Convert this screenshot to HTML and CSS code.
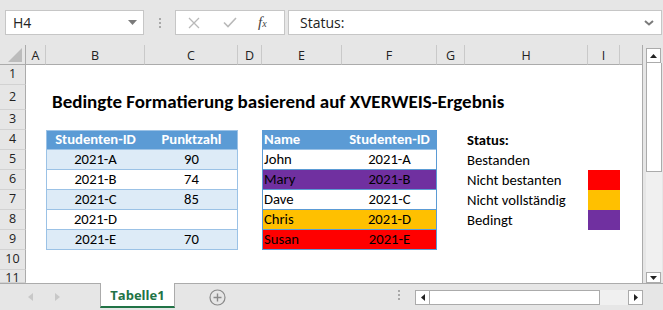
FILE: index.html
```html
<!DOCTYPE html>
<html lang="de">
<head>
    <meta charset="UTF-8">
    <title>Tabelle1 - Excel</title>
    <link rel="stylesheet" href="styles.css">
</head>
<body>
    <div class="formula-bar">
        <div class="name-box">
            <span>H4</span>
            <svg width="9" height="5" viewBox="0 0 9 5"><path d="M0 0h9L4.5 5z" fill="#7a7a7a"/></svg>
        </div>
        <div class="bar-dots"><i></i><i></i><i></i></div>
        <div class="fx-buttons">
            <svg class="fx-cancel" width="12" height="12" viewBox="0 0 12 12"><path d="M1 1l10 10M11 1L1 11" stroke="#b9b9b9" stroke-width="1.3" fill="none"/></svg>
            <svg class="fx-enter" width="14" height="11" viewBox="0 0 14 11"><path d="M1 5.5l4 4L13 1" stroke="#b9b9b9" stroke-width="1.6" fill="none"/></svg>
            <span class="fx-label">f<small>x</small></span>
        </div>
        <div class="formula-input">
            <span>Status:</span>
            <svg width="10" height="6" viewBox="0 0 10 6"><path d="M1 1l4 3.5L9 1" stroke="#7a7a7a" stroke-width="2" fill="none"/></svg>
        </div>
    </div>

    <div class="workspace">
        <div class="sheet">
            <!-- Spaltenköpfe -->
            <div class="col-head corner"><svg width="14" height="14" viewBox="0 0 14 14"><path d="M14 0v14H0z" fill="#bcbcbc"/></svg></div>
            <div class="col-head">A</div>
            <div class="col-head">B</div>
            <div class="col-head">C</div>
            <div class="col-head">D</div>
            <div class="col-head">E</div>
            <div class="col-head">F</div>
            <div class="col-head">G</div>
            <div class="col-head">H</div>
            <div class="col-head">I</div>
            <div class="col-head last"></div>

            <!-- Zeilenköpfe -->
            <div class="row-head r1">1</div>
            <div class="row-head r2">2</div>
            <div class="row-head r3">3</div>
            <div class="row-head r4">4</div>
            <div class="row-head r5">5</div>
            <div class="row-head r6">6</div>
            <div class="row-head r7">7</div>
            <div class="row-head r8">8</div>
            <div class="row-head r9">9</div>
            <div class="row-head r10">10</div>
            <div class="row-head r11">11</div>

            <div class="title">Bedingte Formatierung basierend auf XVERWEIS-Ergebnis</div>

            <div class="table-scores">
                <div class="th">Studenten-ID</div><div class="th">Punktzahl</div>
                <div class="td band">2021-A</div><div class="td band">90</div>
                <div class="td">2021-B</div><div class="td">74</div>
                <div class="td band">2021-C</div><div class="td band">85</div>
                <div class="td">2021-D</div><div class="td"></div>
                <div class="td band last">2021-E</div><div class="td band last">70</div>
            </div>

            <div class="table-names">
                <div class="th left">Name</div><div class="th">Studenten-ID</div>
                <div class="td left">John</div><div class="td">2021-A</div>
                <div class="td left purple">Mary</div><div class="td purple">2021-B</div>
                <div class="td left">Dave</div><div class="td">2021-C</div>
                <div class="td left orange">Chris</div><div class="td orange">2021-D</div>
                <div class="td left red last">Susan</div><div class="td red last">2021-E</div>
            </div>

            <div class="legend">
                <div class="legend-text bold">Status:</div><div></div>
                <div class="legend-text">Bestanden</div><div></div>
                <div class="legend-text">Nicht bestanten</div><div class="swatch red"></div>
                <div class="legend-text">Nicht vollständig</div><div class="swatch orange"></div>
                <div class="legend-text">Bedingt</div><div class="swatch purple"></div>
            </div>
        </div>

        <div class="vscroll">
            <div class="scroll-btn up"><svg width="7" height="4" viewBox="0 0 7 4"><path d="M0 4h7L3.5 0z" fill="#222"/></svg></div>
            <div class="vthumb"></div>
            <div class="vtrack"></div>
            <div class="scroll-btn down"><svg width="7" height="4" viewBox="0 0 7 4"><path d="M0 0h7L3.5 4z" fill="#222"/></svg></div>
        </div>
    </div>

    <div class="tab-bar">
        <div class="tab-nav">
            <svg width="5" height="8" viewBox="0 0 5 8"><path d="M5 0v8L0 4z" fill="#c8c8c8"/></svg>
            <svg width="5" height="8" viewBox="0 0 5 8"><path d="M0 0v8l5-4z" fill="#c8c8c8"/></svg>
        </div>
        <div class="sheet-tab">Tabelle1</div>
        <div class="add-sheet">
            <svg width="17" height="17" viewBox="0 0 17 17"><circle cx="8.5" cy="8.5" r="7.5" stroke="#8a8a8a" stroke-width="1.2" fill="none"/><path d="M8.5 4.5v8M4.5 8.5h8" stroke="#8a8a8a" stroke-width="1.4"/></svg>
        </div>
        <div class="bar-dots tab-dots"><i></i><i></i><i></i></div>
        <div class="hscroll">
            <div class="scroll-btn"><svg width="4" height="7" viewBox="0 0 4 7"><path d="M4 0v7L0 3.5z" fill="#222"/></svg></div>
            <div class="hthumb"></div>
            <div class="htrack"></div>
            <div class="scroll-btn"><svg width="4" height="7" viewBox="0 0 4 7"><path d="M0 0v7l4-3.5z" fill="#222"/></svg></div>
        </div>
    </div>
</body>
</html>
```

FILE: styles.css
```css
* {
    margin: 0;
    padding: 0;
    box-sizing: border-box;
}

:root {
    --ui-bg: #e6e6e6;
    --ui-line: #ababab;
    --head-line: #c9c9c9;
    --table-blue: #5b9bd5;
    --table-band: #ddebf7;
    --table-line: #9bc2e6;
    --excel-green: #217346;
}

body {
    width: 663px;
    height: 310px;
    overflow: hidden;
    background: var(--ui-bg);
    font-family: "Segoe UI", "Open Sans", "Noto Sans", sans-serif;
    color: #222;
}

/* Bearbeitungsleiste */
.formula-bar {
    height: 45px;
    display: flex;
    padding: 10px 1px 0 5px;
}

.name-box {
    width: 139px;
    height: 25px;
    background: #fff;
    border: 1px solid #c6c6c6;
    display: flex;
    align-items: center;
    justify-content: space-between;
    padding: 0 6px 0 7px;
    font-size: 14px;
}

.bar-dots {
    width: 31px;
    height: 25px;
    display: flex;
    flex-direction: column;
    align-items: center;
    justify-content: center;
    gap: 2px;
}

.bar-dots i {
    width: 2px;
    height: 2px;
    background: #a8a8a8;
}

.fx-buttons {
    width: 110px;
    height: 25px;
    background: #fff;
    border: 1px solid #c6c6c6;
    display: flex;
    align-items: center;
    padding-left: 12px;
}

.fx-enter {
    margin-left: 23px;
}

.fx-label {
    margin-left: 21px;
    font-family: "Liberation Serif", "DejaVu Serif", serif;
    font-style: italic;
    font-size: 15px;
    color: #444;
    line-height: 1;
}

.fx-label small {
    font-size: 10px;
}

.formula-input {
    flex: 1;
    height: 25px;
    margin-left: 3px;
    background: #fff;
    border: 1px solid #c6c6c6;
    display: flex;
    align-items: center;
    justify-content: space-between;
    padding: 0 7px 0 11px;
    font-size: 14px;
}

/* Tabellenblatt */
.workspace {
    height: 238px;
    display: flex;
}

.sheet {
    width: 643px;
    display: grid;
    grid-template-columns: 26px 20px 99px 93px 24px 80px 95px 28px 123px 32px 1fr;
    grid-template-rows: 20px 20px 25px repeat(8, 20px) 13px;
    background: #fff;
    border-right: 1px solid var(--ui-line);
    font-family: "Carlito", "Calibri", "Lato", sans-serif;
    font-size: 14.67px;
    color: #000;
    overflow: hidden;
}

.col-head {
    background: var(--ui-bg);
    border-right: 1px solid var(--head-line);
    border-bottom: 1px solid var(--ui-line);
    font-family: "Segoe UI", "Open Sans", sans-serif;
    font-size: 12.5px;
    color: #222;
    display: flex;
    align-items: center;
    justify-content: center;
    padding-top: 1px;
}

.col-head.corner {
    align-items: flex-end;
    justify-content: flex-end;
    padding: 0 3px 2px 0;
    border-right-color: var(--ui-line);
}

.col-head.last {
    border-right: none;
}

.row-head {
    grid-column: 1;
    background: var(--ui-bg);
    border-right: 1px solid var(--ui-line);
    border-bottom: 1px solid #d2d2d2;
    font-family: "Segoe UI", "Open Sans", sans-serif;
    font-size: 12.5px;
    color: #222;
    display: flex;
    align-items: center;
    justify-content: center;
    line-height: 1;
}

.r1 { grid-row: 2; }
.r2 { grid-row: 3; }
.r3 { grid-row: 4; }
.r4 { grid-row: 5; }
.r5 { grid-row: 6; }
.r6 { grid-row: 7; }
.r7 { grid-row: 8; }
.r8 { grid-row: 9; }
.r9 { grid-row: 10; }
.r10 { grid-row: 11; }
.r11 { grid-row: 12; align-items: flex-start; padding-top: 2px; }

.title {
    grid-column: 3 / -1;
    grid-row: 3;
    font-size: 19px;
    font-weight: bold;
    white-space: nowrap;
    padding: 5px 0 0 6px;
}

/* Tabellen */
.table-scores,
.table-names {
    grid-row: 5 / 11;
    display: grid;
    grid-template-rows: repeat(6, 20px);
}

.table-scores {
    grid-column: 3 / 5;
    grid-template-columns: 99px 93px;
    outline: 1px solid var(--table-line);
    outline-offset: -1px;
}

.table-names {
    grid-column: 6 / 8;
    grid-template-columns: 80px 95px;
    outline: 1px solid var(--table-blue);
    outline-offset: -1px;
}

.th,
.td {
    line-height: 19px;
    text-align: center;
    white-space: nowrap;
    border-bottom: 1px solid var(--table-line);
}

.table-names .td {
    border-bottom-color: var(--table-blue);
}

.th {
    background: var(--table-blue);
    color: #fff;
    font-weight: bold;
}

.td.last {
    border-bottom: none;
}

.td.band {
    background: var(--table-band);
}

.left {
    text-align: left;
    padding-left: 2px;
}

.purple { background: #7030a0; }
.orange { background: #ffc000; }
.red { background: #ff0000; }

/* Legende */
.legend {
    grid-column: 9 / 11;
    grid-row: 5 / 10;
    display: grid;
    grid-template-columns: 123px 32px;
    grid-template-rows: repeat(5, 20px);
}

.legend-text {
    line-height: 20px;
    padding-left: 2px;
    white-space: nowrap;
}

.legend-text.bold {
    font-weight: bold;
}

/* Bildlaufleisten */
.vscroll {
    flex: 1;
    display: flex;
    flex-direction: column;
    padding: 3px 1px 0 3px;
}

.scroll-btn {
    width: 15px;
    height: 15px;
    background: #fff;
    border: 1px solid var(--ui-line);
    display: flex;
    align-items: center;
    justify-content: center;
    flex-shrink: 0;
}

.vthumb {
    height: 109px;
    background: #fff;
    border: 1px solid var(--ui-line);
    border-top: none;
}

.vtrack {
    flex: 1;
    background: #f0f0f0;
}

.scroll-btn.down {
    height: 11px;
}

.tab-bar {
    height: 27px;
    display: flex;
    border-top: 1px solid var(--ui-line);
}

.tab-nav {
    width: 100px;
    display: flex;
    align-items: center;
    padding-left: 28px;
    gap: 22px;
}

.sheet-tab {
    width: 75px;
    height: 25px;
    margin-top: -1px;
    background: #fff;
    border-left: 1px solid var(--ui-line);
    border-right: 1px solid var(--ui-line);
    border-bottom: 2px solid var(--excel-green);
    color: var(--excel-green);
    font-weight: bold;
    font-size: 13px;
    display: flex;
    align-items: center;
    justify-content: center;
}

.add-sheet {
    width: 83px;
    display: flex;
    align-items: center;
    padding-left: 34px;
}

.tab-dots {
    width: 32px;
    height: auto;
    margin-left: 125px;
    padding-bottom: 4px;
}

.hscroll {
    width: 228px;
    height: 15px;
    margin-top: 6px;
    display: flex;
}

.hthumb {
    width: 170px;
    background: #fff;
    border: 1px solid var(--ui-line);
    border-left: none;
}

.htrack {
    flex: 1;
    background: #f0f0f0;
}
```
